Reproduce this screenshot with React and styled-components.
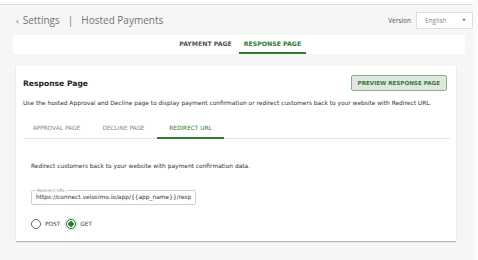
import styled, { createGlobalStyle } from "styled-components";

const GlobalStyle = createGlobalStyle`
    body {
        margin: 0;
        background: #f6f6f6;
        font-family: "DejaVu Sans", sans-serif;
        color: #333;
    }
`

const green = "#2e7d32";

const App = () => {
    return (
        <>
            <GlobalStyle />
            <Page>
                <TopStrip />
                <Header>
                    <Title>
                        <span className="back">‹</span>Settings<span className="sep">|</span>Hosted Payments
                    </Title>
                    <Version>
                        <label>Version</label>
                        <Select>
                            <span>English</span>
                            <Caret />
                        </Select>
                    </Version>
                </Header>
                <TabBar>
                    <MainTab>PAYMENT PAGE</MainTab>
                    <MainTab $active>RESPONSE PAGE</MainTab>
                </TabBar>
                <Card>
                    <CardHeader>
                        <h2>Response Page</h2>
                        <PreviewButton>PREVIEW RESPONSE PAGE</PreviewButton>
                    </CardHeader>
                    <Description>
                        Use the hosted Approval and Decline page to display payment confirmation or redirect customers back to your website with Redirect URL.
                    </Description>
                    <SubTabs>
                        <SubTab>APPROVAL PAGE</SubTab>
                        <SubTab>DECLINE PAGE</SubTab>
                        <SubTab $active>REDIRECT URL</SubTab>
                    </SubTabs>
                    <Content>
                        <p>Redirect customers back to your website with payment confirmation data.</p>
                        <UrlField>
                            <legend>Redirect URL</legend>
                            <input readOnly value="https://connect.velosimo.io/app/{{app_name}}/response" />
                        </UrlField>
                        <Radios>
                            <RadioOption>
                                <Radio />
                                POST
                            </RadioOption>
                            <RadioOption>
                                <Radio $checked />
                                GET
                            </RadioOption>
                        </Radios>
                    </Content>
                </Card>
            </Page>
        </>
    )
}

const Page = styled.div`
    min-height: 260px;
    border-right: 5px solid #fafafa;
    box-sizing: border-box;
`

const TopStrip = styled.div`
    height: 4px;
    background: #fff;
    border-bottom: 1px solid #dcdcdc;
`

const Header = styled.div`
    height: 30px;
    display: flex;
    align-items: center;
    justify-content: space-between;
    padding-left: 16px;
`

const Title = styled.div`
    font-family: "Open Sans", sans-serif;
    font-size: 10px;
    color: #747474;
    .back {
        font-size: 9px;
        margin-right: 4px;
    }
    .sep {
        margin: 0 8px;
    }
`

const Version = styled.div`
    display: flex;
    align-items: center;
    gap: 5px;
    label {
        font-family: "Open Sans", sans-serif;
        font-size: 6.5px;
        color: #555;
    }
`

const Select = styled.div`
    width: 57px;
    height: 17px;
    box-sizing: border-box;
    background: #fff;
    border: 1px solid #dedede;
    display: flex;
    align-items: center;
    justify-content: space-between;
    padding: 0 6px 0 8px;
    font-family: "Open Sans", sans-serif;
    font-size: 6.5px;
    color: #888;
`

const Caret = styled.span`
    width: 0;
    height: 0;
    border-left: 2.5px solid transparent;
    border-right: 2.5px solid transparent;
    border-top: 2.5px solid #777;
`

const TabBar = styled.div`
    margin: 0 8px 12px 13px;
    height: 19px;
    background: #fff;
    display: flex;
    justify-content: center;
`

const MainTab = styled.div`
    min-width: 67px;
    padding: 0 3px;
    box-sizing: border-box;
    display: flex;
    align-items: center;
    justify-content: center;
    font-family: "DejaVu Sans", sans-serif;
    font-weight: 700;
    font-size: 6.2px;
    color: ${p => p.$active ? green : "#555"};
    border-bottom: 2px solid ${p => p.$active ? green : "transparent"};
`

const Card = styled.div`
    margin: 0 17px 0 16px;
    background: #fff;
    box-shadow: 0 1px 1px rgba(0, 0, 0, 0.25);
    padding: 9px 6px 12px 7px;
`

const CardHeader = styled.div`
    display: flex;
    align-items: center;
    justify-content: space-between;
    h2 {
        margin: 0;
        font-size: 7.6px;
        font-weight: 700;
        color: #222;
    }
`

const PreviewButton = styled.button`
    margin-right: 3px;
    height: 16px;
    padding: 0 6px;
    background: #e4e4e4;
    border: 1px solid #7cb87e;
    border-radius: 2px;
    color: ${green};
    font-family: "DejaVu Sans", sans-serif;
    font-weight: 700;
    font-size: 5.6px;
`

const Description = styled.p`
    margin: 8px 0 0;
    font-size: 5.9px;
    line-height: 8px;
    color: #333;
`

const SubTabs = styled.div`
    margin-top: 12px;
    height: 19px;
    display: flex;
    border-bottom: 1px solid #e3e3e3;
`

const SubTab = styled.div`
    width: 67px;
    display: flex;
    align-items: center;
    justify-content: center;
    font-size: 5.8px;
    color: ${p => p.$active ? green : "#888"};
    border-bottom: 2px solid ${p => p.$active ? green : "transparent"};
    margin-bottom: -1px;
`

const Content = styled.div`
    padding: 23px 0 0 8px;
    p {
        margin: 0;
        font-size: 5.9px;
        line-height: 8px;
        color: #333;
    }
`

const UrlField = styled.fieldset`
    margin: 18px 0 0;
    width: 165px;
    box-sizing: border-box;
    border: 1px solid #cfcfcf;
    border-radius: 2px;
    padding: 0 4px 2px;
    min-inline-size: 0;
    legend {
        font-size: 4.4px;
        color: #999;
        padding: 0 1px;
        line-height: 5px;
    }
    input {
        display: block;
        width: 100%;
        height: 9px;
        border: none;
        outline: none;
        padding: 0;
        margin: 0;
        font-family: "DejaVu Sans", sans-serif;
        font-size: 5.9px;
        line-height: 9px;
        color: #333;
        background: transparent;
    }
`

const Radios = styled.div`
    display: flex;
    gap: 6px;
    margin-top: 14px;
`

const RadioOption = styled.label`
    display: flex;
    align-items: center;
    gap: 4px;
    font-size: 5.8px;
    color: #444;
`

const Radio = styled.span`
    width: 10px;
    height: 10px;
    box-sizing: border-box;
    border-radius: 50%;
    border: 1px solid ${p => p.$checked ? green : "#666"};
    background: ${p => p.$checked ? `radial-gradient(circle, ${green} 0 2.5px, #fff 3px)` : "#fff"};
    box-shadow: ${p => p.$checked ? "0 0 0 1.5px rgba(46, 125, 50, 0.18)" : "none"};
`

export default App;
